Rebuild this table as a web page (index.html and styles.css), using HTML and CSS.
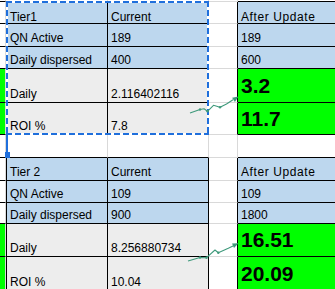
FILE: index.html
```html
<!DOCTYPE html>
<html>
<head>
<meta charset="utf-8">
<link rel="stylesheet" href="styles.css">
</head>
<body>
<div class="sheet">
  <!-- row 0 -->
  <div class="cell strip"></div>
  <div class="cell colA edge"></div>
  <div class="cell edge"></div>
  <div class="cell colC"></div>
  <div class="cell edge"></div>
  <!-- row 1 -->
  <div class="cell strip"></div>
  <div class="cell colA tb blue first">Tier1</div>
  <div class="cell tb blue first">Current</div>
  <div class="cell colC tb"></div>
  <div class="cell tb blue first wide">After Update</div>
  <!-- row 2 -->
  <div class="cell strip"></div>
  <div class="cell colA tb blue">QN Active</div>
  <div class="cell tb blue">189</div>
  <div class="cell colC tb"></div>
  <div class="cell tb blue">189</div>
  <!-- row 3 -->
  <div class="cell strip"></div>
  <div class="cell colA tb blue">Daily dispersed</div>
  <div class="cell tb blue">400</div>
  <div class="cell colC tb"></div>
  <div class="cell tb blue">600</div>
  <!-- row 4 -->
  <div class="cell strip green"></div>
  <div class="cell colA tb gray">Daily</div>
  <div class="cell tb gray">2.116402116</div>
  <div class="cell colC tb"></div>
  <div class="cell tb green big">3.2</div>
  <!-- row 5 -->
  <div class="cell strip green"></div>
  <div class="cell colA tb gray">ROI %</div>
  <div class="cell tb gray">7.8</div>
  <div class="cell colC tb"></div>
  <div class="cell tb green big">11.7</div>
  <!-- row 6 -->
  <div class="cell strip"></div>
  <div class="cell colA edge"></div>
  <div class="cell edge"></div>
  <div class="cell colC"></div>
  <div class="cell edge"></div>
  <!-- row 7 -->
  <div class="cell strip"></div>
  <div class="cell colA tb blue">Tier 2</div>
  <div class="cell tb blue">Current</div>
  <div class="cell colC tb"></div>
  <div class="cell tb blue wide">After Update</div>
  <!-- row 8 -->
  <div class="cell strip"></div>
  <div class="cell colA tb blue">QN Active</div>
  <div class="cell tb blue">109</div>
  <div class="cell colC tb"></div>
  <div class="cell tb blue">109</div>
  <!-- row 9 -->
  <div class="cell strip"></div>
  <div class="cell colA tb blue">Daily dispersed</div>
  <div class="cell tb blue">900</div>
  <div class="cell colC tb"></div>
  <div class="cell tb blue">1800</div>
  <!-- row 10 -->
  <div class="cell strip green"></div>
  <div class="cell colA tb gray">Daily</div>
  <div class="cell tb gray">8.256880734</div>
  <div class="cell colC tb"></div>
  <div class="cell tb green big">16.51</div>
  <!-- row 11 -->
  <div class="cell strip green"></div>
  <div class="cell colA tb gray">ROI %</div>
  <div class="cell tb gray">10.04</div>
  <div class="cell colC tb"></div>
  <div class="cell tb green big">20.09</div>

  <div class="marquee"></div>
  <div class="selbar"></div>
  <div class="handle"></div>

  <svg class="arrows" viewBox="0 0 335 289" width="335" height="289">
    <g fill="none" stroke="#3f9a7c" stroke-width="1.1" stroke-linejoin="round">
      <polyline points="190,113 200,109.5 204,108.7 207.5,111.3 213.5,105.3 220,107.3 226.5,104 233,99.8"/>
      <polyline points="188,261 200,257.5 206.5,257.7 215,250 218.3,252.7 228.3,248.3 233.5,245.8"/>
    </g>
    <g fill="#3f9a7c">
      <polygon points="238.5,96.5 232.1,97.7 234.9,101.9"/>
      <polygon points="238.5,243.3 232,243.5 234,248.1"/>
      <circle cx="200" cy="109.5" r="1.2"/>
      <circle cx="207.5" cy="111.3" r="1.2"/>
      <circle cx="220" cy="107.3" r="1.2"/>
      <circle cx="200" cy="257.5" r="1.2"/>
      <circle cx="206.5" cy="257.7" r="1.2"/>
      <circle cx="218.3" cy="252.7" r="1.2"/>
    </g>
  </svg>
</div>
</body>
</html>
```

FILE: styles.css
```css
* {
  box-sizing: border-box;
  margin: 0;
  padding: 0;
}

html,
body {
  width: 335px;
  height: 289px;
  overflow: hidden;
  background: #fff;
}

body {
  font-family: "Liberation Sans", Arial, sans-serif;
  font-size: 12px;
  color: #000;
}

.sheet {
  position: relative;
  display: grid;
  grid-template-columns: 6px 102px 101px 29px 110px;
  grid-template-rows: 2px 22px 23px 22px 34px 32px 23px 23px 22px 21px 33px 34px;
  width: 335px;
  height: 289px;
  overflow: hidden;
}

.cell {
  display: flex;
  align-items: flex-end;
  padding: 0 3px 1px;
  line-height: 14px;
  white-space: nowrap;
  overflow: hidden;
  border-right: 1px solid #d9d9d9;
  border-bottom: 1px solid #d9d9d9;
}

.strip {
  padding: 0;
  border-bottom-color: #000;
}

.colA {
  border-left: 1px solid transparent;
}

.tb {
  border-right-color: #000;
  border-bottom-color: #000;
}

.colA.tb {
  border-left-color: #000;
}

.colC.tb {
  border-bottom-color: #d9d9d9;
}

.edge {
  border-bottom-color: #000;
}

.blue {
  background: #bdd7ee;
}

.gray {
  background: #ededed;
}

.green {
  background: #00ff00;
}

.big {
  align-items: center;
  padding: 0 3px;
  font-size: 21px;
  font-weight: 700;
  line-height: 24px;
}

.first {
  padding-bottom: 0;
  line-height: 12px;
}

.wide {
  letter-spacing: 0.6px;
}

.marquee {
  position: absolute;
  left: 6px;
  top: 1px;
  width: 203px;
  height: 134px;
  pointer-events: none;
  background:
    repeating-linear-gradient(90deg, #1f6fdc 0 6px, #fff 6px 9px) left top / 100% 2px no-repeat,
    repeating-linear-gradient(90deg, #1f6fdc 0 6px, #fff 6px 9px) left bottom / 100% 2px no-repeat,
    repeating-linear-gradient(180deg, #1f6fdc 0 6px, #fff 6px 9px) left top / 2px 100% no-repeat,
    repeating-linear-gradient(180deg, #1f6fdc 0 6px, #fff 6px 9px) right top / 2px 100% no-repeat;
}

.selbar {
  position: absolute;
  left: 6px;
  top: 135px;
  width: 2px;
  height: 18px;
  background: #1f6fdc;
}

.handle {
  position: absolute;
  left: 5px;
  top: 152px;
  width: 5px;
  height: 6px;
  background: #1f6fdc;
}

.arrows {
  position: absolute;
  left: 0;
  top: 0;
  pointer-events: none;
}
```
